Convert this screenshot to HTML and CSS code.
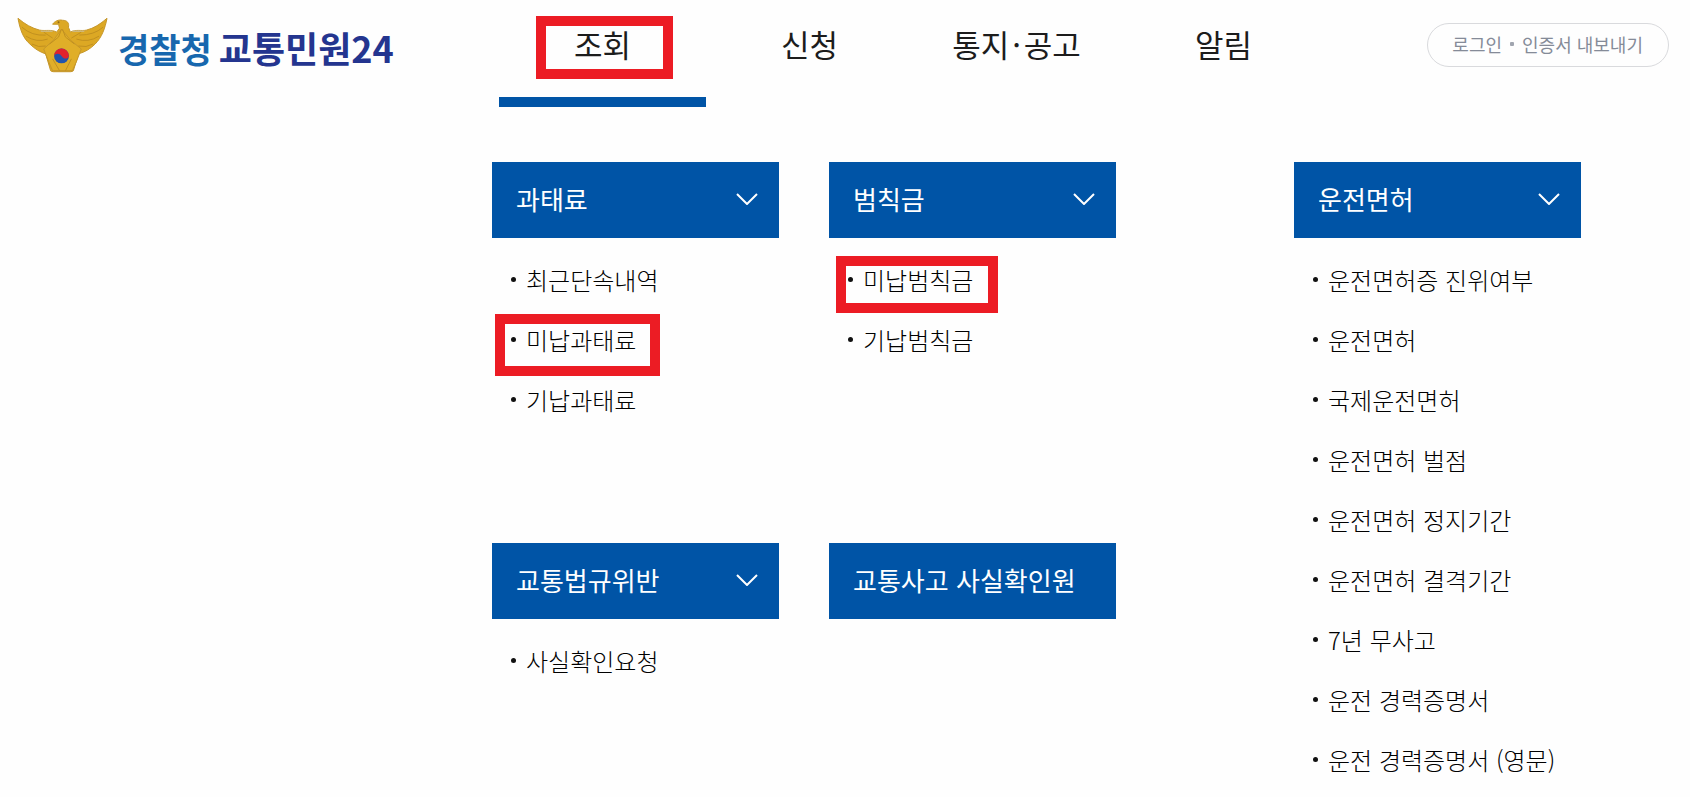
FILE: index.html
```html
<!DOCTYPE html>
<html lang="ko">
<head>
<meta charset="utf-8">
<meta name="viewport" content="width=device-width, initial-scale=1">
<title>경찰청 교통민원24</title>
<link rel="stylesheet" href="styles.css">
</head>
<body>
<header class="header">
  <a class="logo" href="#">
    <svg class="logo-mark" viewBox="0 0 92 56" aria-hidden="true">
      <g stroke="#c4962a" stroke-width="1" stroke-linejoin="round">
        <path fill="#dca824" d="M1 1C3 12 6 21 13 27C18 32 23 35 29 37L34 54Q35 55 37 55H54Q56 55 57 54L62 37C69 35 74 32 79 27C86 20 89 11 91 1C84 7 78 11 70 13C65 14 59 12 54 15L52 10C53 6 51 3 46 3C42 2 38 4 36 7L42 7L43 11L40 15C35 12 29 14 23 13C15 11 8 7 1 1Z"/>
        <path fill="#e0ae28" d="M45 12L54 23L65 32L60 45L56 54H36L32 45L27 32L37 23Z"/>
      </g>
      <g fill="none" stroke="#c0901f" stroke-width="1">
        <path d="M5 10Q15 19 29 18M9 19Q20 26 31 22M15 27Q22 31 29 29M27 15L36 21M87 10Q78 18 63 18M83 19Q72 26 60 22M77 27Q70 31 62 29M65 15L55 21M45 12L42 20L33 27M46 12L49 20L58 27M36 42L43 54M55 42L49 54"/>
      </g>
      <path d="M24 14H36M56 14H68" fill="none" stroke="#c9c2a8" stroke-width="1"/>
      <circle cx="45" cy="39" r="7.500" fill="#2154ac"/>
      <path fill="#e0222d" d="M37.500 39A7.500 7.500 0 0 1 52.500 39C51 43 47 42 45 39C43 36 39 36 37.500 39Z"/>
      <circle cx="42" cy="5" r="1" fill="#8f6a18"/>
    </svg>
    <span class="logo-text"><span class="logo-agency">경찰청</span><span class="logo-service">교통민원24</span></span>
  </a>
  <nav class="nav" aria-label="주 메뉴">
    <a class="nav-item nav-item-active" href="#">조회<span class="mark mark-nav"></span></a>
    <a class="nav-item" href="#">신청</a>
    <a class="nav-item" href="#">통지<span class="nav-dot">·</span>공고</a>
    <a class="nav-item" href="#">알림</a>
  </nav>
  <div class="account">
    <div class="pill">
      <a href="#">로그인</a>
      <span class="pill-dot"></span>
      <a href="#">인증서 내보내기</a>
    </div>
  </div>
</header>

<main class="menu">
  <section class="group group-fine">
    <button class="group-title" type="button">과태료
      <svg class="chevron" viewBox="0 0 22 12" aria-hidden="true"><path d="M1 1L11 11L21 1"/></svg>
    </button>
    <ul class="links">
      <li><a href="#">최근단속내역</a></li>
      <li><a href="#">미납과태료<span class="mark mark-fine"></span></a></li>
      <li><a href="#">기납과태료</a></li>
    </ul>
  </section>
  <section class="group group-penalty">
    <button class="group-title" type="button">범칙금
      <svg class="chevron" viewBox="0 0 22 12" aria-hidden="true"><path d="M1 1L11 11L21 1"/></svg>
    </button>
    <ul class="links">
      <li><a href="#">미납범칙금<span class="mark mark-penalty"></span></a></li>
      <li><a href="#">기납범칙금</a></li>
    </ul>
  </section>
  <section class="group group-violation">
    <button class="group-title" type="button">교통법규위반
      <svg class="chevron" viewBox="0 0 22 12" aria-hidden="true"><path d="M1 1L11 11L21 1"/></svg>
    </button>
    <ul class="links">
      <li><a href="#">사실확인요청</a></li>
    </ul>
  </section>
  <section class="group group-accident">
    <a class="group-title" href="#">교통사고 사실확인원</a>
  </section>
  <section class="group group-license">
    <button class="group-title" type="button">운전면허
      <svg class="chevron" viewBox="0 0 22 12" aria-hidden="true"><path d="M1 1L11 11L21 1"/></svg>
    </button>
    <ul class="links">
      <li><a href="#">운전면허증 진위여부</a></li>
      <li><a href="#">운전면허</a></li>
      <li><a href="#">국제운전면허</a></li>
      <li><a href="#">운전면허 벌점</a></li>
      <li><a href="#">운전면허 정지기간</a></li>
      <li><a href="#">운전면허 결격기간</a></li>
      <li><a href="#">7년 무사고</a></li>
      <li><a href="#">운전 경력증명서</a></li>
      <li><a href="#">운전 경력증명서 (영문)</a></li>
    </ul>
  </section>
</main>
</body>
</html>
```

FILE: styles.css
```css
* {
  box-sizing: border-box;
}

body {
  margin: 0;
  background: #fefefe;
  color: #1c1c1c;
  font-family: "Noto Sans CJK KR", sans-serif;
}

a {
  color: inherit;
  text-decoration: none;
}

/* Header */
.header {
  display: grid;
  grid-template-columns: 499fr 828fr 363fr;
  height: 107px;
}

.logo {
  display: flex;
  align-items: flex-start;
  gap: 10px;
  padding: 17px 0 0 17px;
}

.logo-mark {
  width: 91px;
  height: 56px;
  flex: none;
}

.logo-text {
  display: flex;
  align-items: baseline;
  gap: 7px;
  padding-top: 6px;
  font-weight: 700;
  line-height: 48px;
  white-space: nowrap;
}

.logo-agency {
  color: #1767ae;
  font-size: 34px;
}

.logo-service {
  color: #24358f;
  font-size: 36px;
}

.nav {
  display: grid;
  grid-template-columns: repeat(4, 1fr);
}

.nav-item {
  position: relative;
  padding-top: 22px;
  border-bottom: 10px solid transparent;
  font-size: 31px;
  font-weight: 400;
  line-height: 44px;
  text-align: center;
  white-space: nowrap;
}

.nav-item-active {
  border-bottom-color: #0054a6;
}

.nav-dot {
  padding: 0 3px;
}

.account {
  display: flex;
  align-items: flex-start;
  justify-content: flex-end;
  padding: 23px 21px 0 0;
}

.pill {
  display: flex;
  align-items: center;
  gap: 8px;
  height: 44px;
  padding: 0 25px 2px 24px;
  border: 1px solid #d9dadd;
  border-radius: 22px;
  color: #858b98;
  font-size: 18px;
  line-height: 26px;
  white-space: nowrap;
}

.pill-dot {
  width: 4px;
  height: 4px;
  border-radius: 1px;
  background: #a0a5af;
}

/* Menu panel */
.menu {
  display: grid;
  grid-template-columns: 492fr 287fr 50fr 287fr 178fr 287fr 109fr;
  grid-template-rows: 269px 1fr;
  row-gap: 112px;
  padding-top: 55px;
}

.group-fine {
  grid-area: 1 / 2;
}

.group-penalty {
  grid-area: 1 / 4;
}

.group-violation {
  grid-area: 2 / 2;
}

.group-accident {
  grid-area: 2 / 4;
}

.group-license {
  grid-area: 1 / 6 / 3 / 7;
}

.group-title {
  display: flex;
  align-items: center;
  justify-content: space-between;
  width: 100%;
  height: 76px;
  padding: 0 21px 2px 24px;
  border: 0;
  background: #0054a6;
  color: #fff;
  font-family: inherit;
  font-size: 26px;
  font-weight: 400;
  line-height: 38px;
  text-align: left;
  white-space: nowrap;
}

.chevron {
  width: 22px;
  height: 12px;
  fill: none;
  stroke: #fff;
  stroke-width: 2;
}

.links {
  margin: 0;
  padding: 11px 0 0 19px;
  list-style: none;
}

.links li {
  display: flex;
}

.links a {
  position: relative;
  display: flex;
  align-items: center;
  gap: 10px;
  height: 60px;
  color: #000;
  font-size: 24px;
  font-weight: 300;
  white-space: nowrap;
}

.links a::before {
  width: 5px;
  height: 5px;
  border-radius: 50%;
  background: #111;
  content: "";
}

/* Red frames around the highlighted entries */
.mark {
  position: absolute;
  border: 10px solid #ec1c24;
  pointer-events: none;
}

.mark-nav {
  top: 16px;
  right: 33px;
  bottom: 18px;
  left: 37px;
}

.mark-fine {
  inset: 5px -24px -7px -16px;
}

.mark-penalty {
  inset: 7px -25px -4px -12px;
}
```
